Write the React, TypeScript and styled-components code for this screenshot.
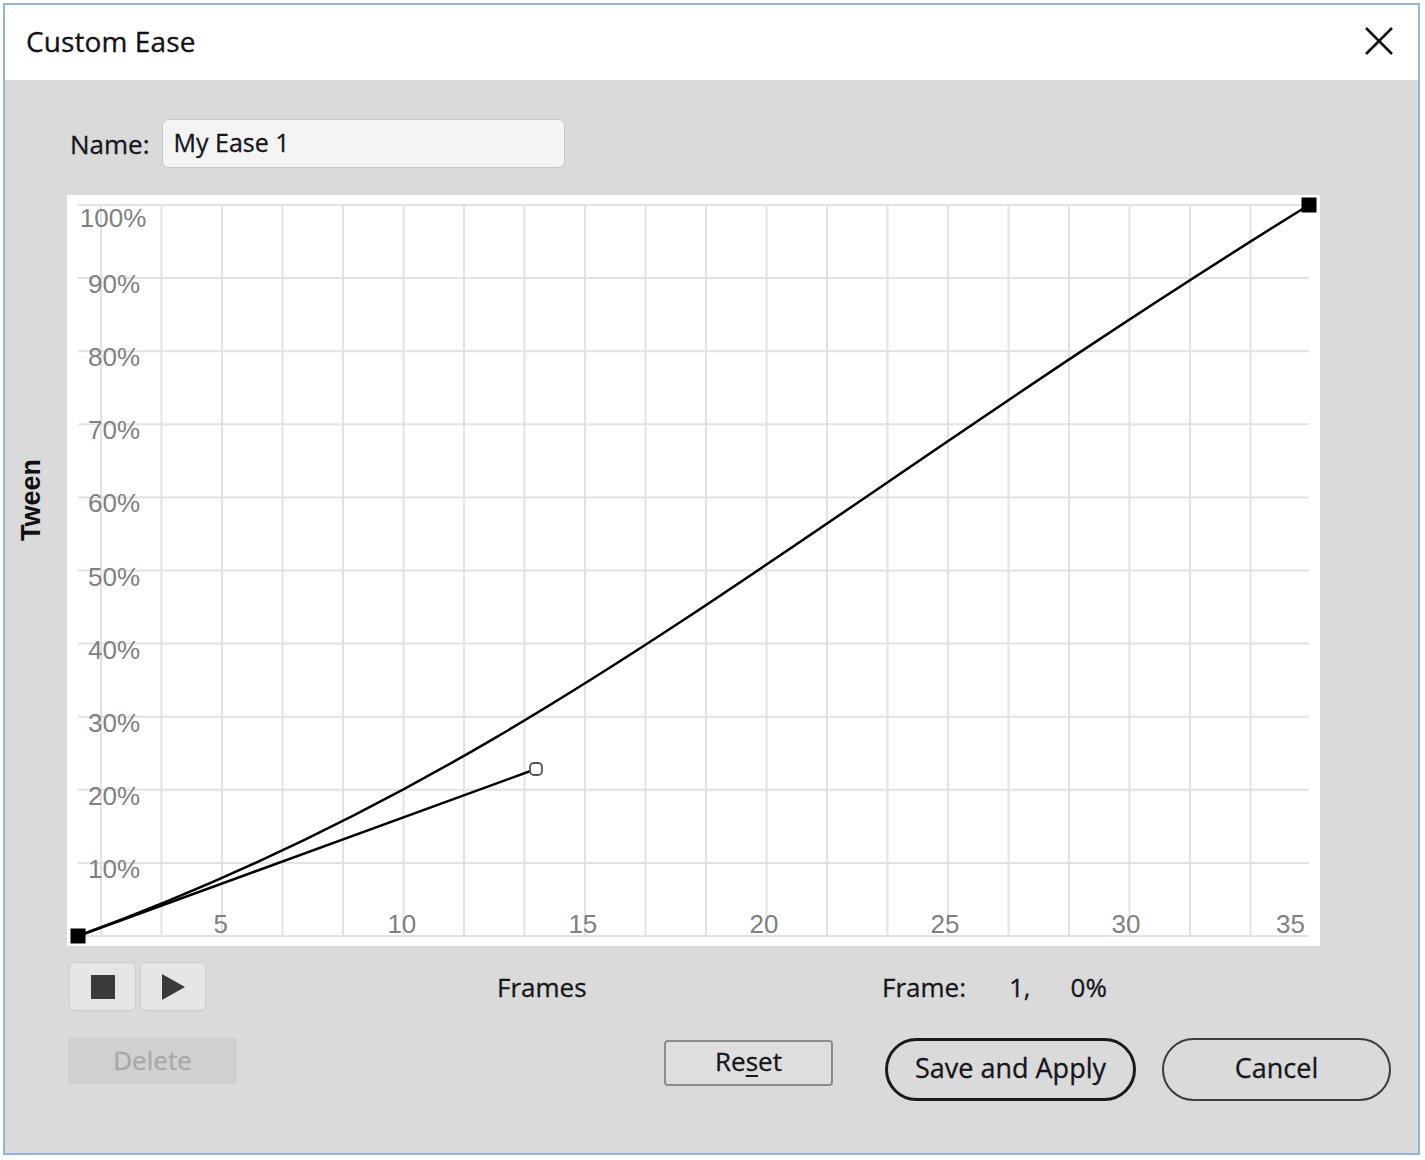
import styled, { createGlobalStyle } from 'styled-components';

const GlobalStyle = createGlobalStyle`
  html, body {
    margin: 0;
    padding: 0;
    background: #ffffff;
  }
  body {
    font-family: "Open Sans", "Noto Sans", "DejaVu Sans", sans-serif;
    color: #15151c;
    -webkit-text-stroke: 0.3px currentColor;
  }
`;

const Window = styled.div`
  box-sizing: border-box;
  margin: 3px 0 0 3px;
  width: 1417px;
  height: 1152px;
  border: 2px solid #8fb3e3;
  display: flex;
  flex-direction: column;
`;

const TitleBar = styled.div`
  height: 75px;
  flex: none;
  background: #ffffff;
  display: flex;
  align-items: center;
  justify-content: space-between;
  padding: 0 23px 3px 21px;
  box-sizing: border-box;
`;

const Title = styled.div`
  font-size: 28px;
  color: #111118;
  letter-spacing: 0.1px;
`;

const CloseButton = styled.button`
  border: none;
  background: transparent;
  padding: 0;
  width: 32px;
  height: 32px;
  display: flex;
  align-items: center;
  justify-content: center;
  cursor: pointer;
`;

const Body = styled.div`
  flex: 1;
  background: #dadada;
  padding-top: 39px;
  display: flex;
  flex-direction: column;
`;

const NameRow = styled.div`
  display: flex;
  align-items: center;
  padding-left: 65px;
  gap: 12px;
`;

const Label = styled.span`
  font-size: 26px;
  color: #15151c;
`;

const NameInput = styled.input`
  box-sizing: border-box;
  width: 403px;
  height: 49px;
  border: 1px solid #c6c6c6;
  border-radius: 6px;
  background: #f4f4f4;
  padding: 0 0 4px 11px;
  font-family: "Open Sans", "Noto Sans", sans-serif;
  font-size: 25px;
  color: #15151c;
  -webkit-text-stroke: 0.3px currentColor;
  outline: none;
`;

const GraphRow = styled.div`
  display: flex;
  margin-top: 27px;
`;

const AxisColumn = styled.div`
  width: 62px;
  display: flex;
  flex-direction: column;
  justify-content: center;
  align-items: center;
  padding: 0 10px 140px 0;
  box-sizing: border-box;
`;

const AxisTitle = styled.span`
  writing-mode: vertical-rl;
  transform: rotate(180deg);
  font-family: "Liberation Sans", Arial, sans-serif;
  font-weight: bold;
  font-size: 27px;
  color: #111;
  -webkit-text-stroke: 0;
`;

const GraphBox = styled.div`
  width: 1253px;
  height: 751px;
  background: #ffffff;
  svg {
    display: block;
  }
`;

const ControlsRow = styled.div`
  display: grid;
  grid-template-columns: 428px 385px auto;
  align-items: center;
  margin-top: 16px;
  padding-left: 64px;
`;

const PlayGroup = styled.div`
  display: flex;
  gap: 4px;
`;

const IconButton = styled.button<{ $width: number }>`
  box-sizing: border-box;
  width: ${({ $width }) => $width}px;
  height: 49px;
  border: 1px solid #cdcdcd;
  border-radius: 5px;
  background: #e6e6e6;
  display: flex;
  align-items: center;
  justify-content: center;
  padding: 0;
`;

const FrameInfo = styled.div`
  display: flex;
  font-size: 26px;
  color: #15151c;
`;

const FrameValue = styled.span<{ $gap: number }>`
  margin-left: ${({ $gap }) => $gap}px;
`;

const BottomRow = styled.div`
  display: flex;
  align-items: flex-start;
  margin-top: 27px;
  padding: 0 27px 0 63px;
`;

const DeleteButton = styled.button`
  width: 169px;
  height: 46px;
  border: none;
  border-radius: 2px;
  background: #d0d0d0;
  color: #a8a8a8;
  font-family: "Open Sans", "Noto Sans", sans-serif;
  font-size: 26px;
  -webkit-text-stroke: 0.3px currentColor;
  padding: 0 0 3px;
`;

const ResetButton = styled.button`
  box-sizing: border-box;
  margin-left: auto;
  margin-top: 2px;
  width: 169px;
  height: 46px;
  border: 2px solid #8c8c8c;
  border-radius: 4px;
  background: #dedede;
  color: #15151c;
  font-family: "Open Sans", "Noto Sans", sans-serif;
  font-size: 26px;
  -webkit-text-stroke: 0.3px currentColor;
  padding: 0 0 4px;
  u {
    text-decoration-thickness: 2px;
    text-underline-offset: 4px;
  }
`;

const PillButton = styled.button<{ $primary?: boolean; $width: number; $gap: number }>`
  box-sizing: border-box;
  margin-left: ${({ $gap }) => $gap}px;
  width: ${({ $width }) => $width}px;
  height: 63px;
  border: ${({ $primary }) => ($primary ? '3.5px solid #1a1a1a' : '2px solid #3c3c3c')};
  border-radius: 32px;
  background: transparent;
  color: #15151c;
  font-family: "Open Sans", "Noto Sans", sans-serif;
  font-size: 27px;
  -webkit-text-stroke: 0.3px currentColor;
  padding: 0 0 4px;
`;

// chart geometry, in px inside the white graph box
const X0 = 11;
const X1 = 1242;
const Y0 = 741;
const Y1 = 10;
const frameX = (f: number) => X0 + ((f - 1) * (X1 - X0)) / 34;
const pctY = (p: number) => Y0 - (p * (Y0 - Y1)) / 100;

const H_LINES = Array.from({ length: 11 }, (_, i) => i * 10);
const V_LINES = Array.from({ length: 20 }, (_, i) => 34 + i * 60.5);
const X_TICKS = [5, 10, 15, 20, 25, 30];
const Y_TICKS = [10, 20, 30, 40, 50, 60, 70, 80, 90];

const HANDLE = { x: 469, y: 574 };
const HANDLE_END = { x: 733, y: 325 };

function EaseChart() {
  const labelStyle = {
    fontFamily: '"Liberation Sans", Arial, sans-serif',
    fontSize: 26,
    fill: '#808080',
    stroke: 'none',
  };
  return (
    <svg width={1253} height={751} viewBox="0 0 1253 751">
      <g stroke="#e2e2e2" strokeWidth={2}>
        {H_LINES.map((p) => (
          <line key={p} x1={X0} x2={X1} y1={pctY(p)} y2={pctY(p)} />
        ))}
        {V_LINES.map((x) => (
          <line key={x} x1={x} x2={x} y1={Y1} y2={Y0} />
        ))}
      </g>
      <g {...labelStyle}>
        <text x={46} y={32} textAnchor="middle">100%</text>
        {Y_TICKS.map((p) => (
          <text key={p} x={47} y={pctY(p) + 15} textAnchor="middle">
            {p}%
          </text>
        ))}
        {X_TICKS.map((f) => (
          <text key={f} x={frameX(f) - 2} y={738} textAnchor="middle">
            {f}
          </text>
        ))}
        <text x={1238} y={738} textAnchor="end">35</text>
      </g>
      <g fill="none" stroke="#000" strokeWidth={2.5}>
        <path
          d={`M${X0} ${Y0} C${HANDLE.x} ${HANDLE.y} ${HANDLE_END.x} ${HANDLE_END.y} ${X1} ${Y1}`}
        />
        <line x1={X0} y1={Y0} x2={HANDLE.x} y2={HANDLE.y} />
      </g>
      <rect x={X0 - 7.5} y={Y0 - 7.5} width={15} height={15} fill="#000" />
      <rect x={X1 - 7.5} y={Y1 - 7.5} width={15} height={15} fill="#000" />
      <rect
        x={HANDLE.x - 6}
        y={HANDLE.y - 6}
        width={12}
        height={12}
        rx={4}
        fill="#fff"
        stroke="#555"
        strokeWidth={1.8}
      />
    </svg>
  );
}

export default function App() {
  return (
    <>
      <GlobalStyle />
      <Window>
        <TitleBar>
          <Title>Custom Ease</Title>
          <CloseButton aria-label="Close">
            <svg width="30" height="30" viewBox="0 0 30 30">
              <path d="M2 2 L28 28 M28 2 L2 28" stroke="#111" strokeWidth="2.6" />
            </svg>
          </CloseButton>
        </TitleBar>
        <Body>
          <NameRow>
            <Label>Name:</Label>
            <NameInput defaultValue="My Ease 1" />
          </NameRow>

          <GraphRow>
            <AxisColumn>
              <AxisTitle>Tween</AxisTitle>
            </AxisColumn>
            <GraphBox>
              <EaseChart />
            </GraphBox>
          </GraphRow>

          <ControlsRow>
            <PlayGroup>
              <IconButton $width={67} aria-label="Stop">
                <svg width="24" height="24" viewBox="0 0 24 24">
                  <rect x="0" y="0" width="24" height="24" fill="#3a3a3a" />
                </svg>
              </IconButton>
              <IconButton $width={66} aria-label="Play">
                <svg width="24" height="26" viewBox="0 0 24 26">
                  <path d="M1 0 L24 13 L1 26 Z" fill="#3a3a3a" />
                </svg>
              </IconButton>
            </PlayGroup>
            <Label>Frames</Label>
            <FrameInfo>
              <span>Frame:</span>
              <FrameValue $gap={43}>1,</FrameValue>
              <FrameValue $gap={40}>0%</FrameValue>
            </FrameInfo>
          </ControlsRow>

          <BottomRow>
            <DeleteButton disabled>Delete</DeleteButton>
            <ResetButton>
              Re<u>s</u>et
            </ResetButton>
            <PillButton $primary $width={251} $gap={52}>
              Save and Apply
            </PillButton>
            <PillButton $width={229} $gap={26}>
              Cancel
            </PillButton>
          </BottomRow>
        </Body>
      </Window>
    </>
  );
}
